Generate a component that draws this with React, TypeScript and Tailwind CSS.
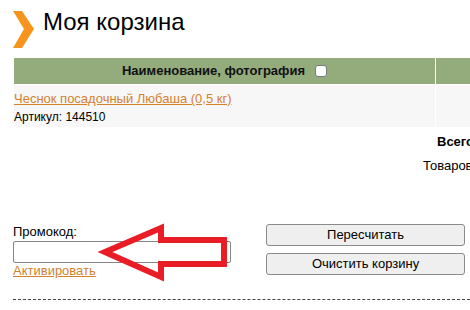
export default function App() {
  return (
    <div className="relative w-[470px] h-[310px] overflow-hidden bg-white font-['Liberation_Sans',Arial,sans-serif] text-black">
      {/* title */}
      <div className="flex items-start h-[58px] pl-[13px]">
        <svg width="21" height="37" viewBox="0 0 21 37" className="mt-[11px] shrink-0">
          <polygon points="0,0 9,0 21,18 9,37 0,37 11,18" fill="#f7941d" />
        </svg>
        <h1 className="ml-[9px] mt-[8px] text-[24px] leading-[28px] font-normal">Моя корзина</h1>
      </div>

      {/* cart table */}
      <div className="ml-[14px] grid grid-cols-[421px_100px] gap-px">
        <div className="h-[26px] bg-[#94ab7c] flex items-center justify-center gap-[10px]">
          <span className="text-[13px] font-bold text-[#111]">Наименование, фотография</span>
          <span className="w-[12px] h-[12px] bg-white border border-[#7a7a7a] rounded-[3px]" />
        </div>
        <div className="h-[26px] bg-[#94ab7c]" />
        <div className="h-[42px] bg-[#f7f7f7] pt-[6px]">
          <a href="#" className="block text-[13px] leading-[16px] text-[#d4812f] underline">
            Чеснок посадочный Любаша (0,5 кг)
          </a>
          <div className="mt-[2px] text-[12px] leading-[16px]">Артикул: 144510</div>
        </div>
        <div className="h-[42px] bg-[#f7f7f7]" />
      </div>

      {/* totals */}
      <div className="mt-[7px] pl-[437px] text-[13px] leading-[16px] font-bold whitespace-nowrap">Всего</div>
      <div className="mt-[8px] pl-[423px] text-[13px] leading-[16px] whitespace-nowrap">Товаров</div>

      {/* promo + buttons */}
      <div className="mt-[50px] flex items-start pl-[13px]">
        <div className="w-[253px]">
          <div className="text-[13px] leading-[16px]">Промокод:</div>
          <div className="mt-[1px] w-[218px] h-[22px] border border-[#858585] rounded-[2px] bg-white" />
          <a href="#" className="block text-[13px] leading-[16px] text-[#d4812f] underline">Активировать</a>
        </div>
        <div className="flex flex-col gap-[7px]">
          <button className="w-[199px] h-[22px] bg-[#efefef] border border-[#8a8a8a] rounded-[3px] text-[13px] text-black">
            Пересчитать
          </button>
          <button className="w-[199px] h-[22px] bg-[#efefef] border border-[#8a8a8a] rounded-[3px] text-[13px] text-black">
            Очистить корзину
          </button>
        </div>
      </div>

      <div className="mt-[20px] ml-[13px] border-t border-dashed border-[#444]" />

      {/* annotation arrow */}
      <svg
        width="140"
        height="70"
        viewBox="0 0 140 70"
        className="absolute left-[94px] top-[220px]"
      >
        <polygon
          points="11,32 67,8 67,20 130,20 130,44 67,44 67,57"
          fill="none"
          stroke="#e91d25"
          strokeWidth="6"
          strokeLinejoin="miter"
        />
      </svg>
    </div>
  );
}
